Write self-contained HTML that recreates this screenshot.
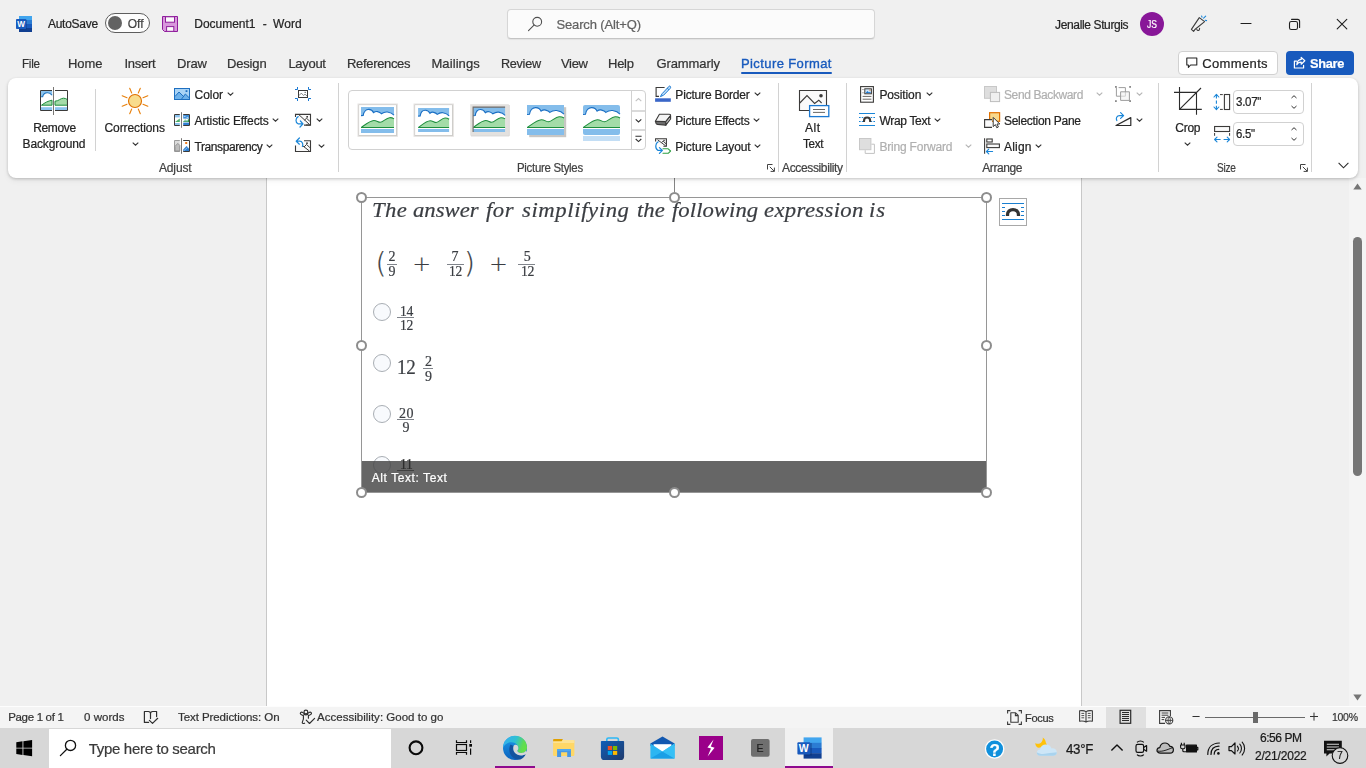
<!DOCTYPE html>
<html lang="en">
<head>
<meta charset="utf-8">
<title>Document1 - Word</title>
<style>
*{box-sizing:border-box;margin:0;padding:0}
html,body{width:1366px;height:768px;overflow:hidden;background:#f0f0f0;font-family:"Liberation Sans",sans-serif;color:#242424}
.a{position:absolute}
.t{position:absolute;white-space:pre;color:#242424;-webkit-text-stroke:0.22px}
svg{position:absolute;overflow:visible}
.sep{position:absolute;width:1px;background:#d2d2d2}
.hd{position:absolute;width:11px;height:11px;border-radius:50%;background:#fff;border:2px solid #8d8d8d;z-index:5}
.rad{position:absolute;width:18px;height:18px;border-radius:50%;background:#f8fafd;border:1.2px solid #a9aeb4}
.fb{position:absolute;height:1.1px;background:#80848b}
</style>
</head>
<body>
<!-- ================= title bar ================= -->
<div class="a" style="left:0;top:0;width:1366px;height:78px;background:#f0f0f0"></div>
<div class="a" style="left:507px;top:9px;width:368px;height:30px;background:#fbfbfb;border:1px solid #d6d6d6;border-bottom-color:#c4c4c4;border-radius:4px;box-shadow:0 1px 1px rgba(0,0,0,.06)"></div>
<div class="a" style="left:105px;top:13px;width:45px;height:20px;border:1.3px solid #5e5e5e;border-radius:10px;background:#fdfdfd"></div>
<div class="a" style="left:108px;top:16px;width:14px;height:14px;border-radius:50%;background:#626262"></div>
<div class="a" style="left:1140px;top:12px;width:24px;height:24px;border-radius:50%;background:#881798"></div>
<!-- tabs underline -->
<div class="a" style="left:741px;top:72px;width:91px;height:2px;background:#185abd;border-radius:1px"></div>
<!-- comments / share -->
<div class="a" style="left:1178px;top:51px;width:100px;height:24px;background:#fff;border:1px solid #d1d1d1;border-radius:4px"></div>
<div class="a" style="left:1286px;top:51px;width:68px;height:24px;background:#185abd;border-radius:4px"></div>

<!-- ================= document area ================= -->
<div class="a" style="left:0;top:178px;width:1366px;height:528px;background:#f0f0f0"></div>
<div class="a" style="left:266px;top:178px;width:816px;height:528px;background:#fff;border-left:1px solid #c8c8c8;border-right:1px solid #c8c8c8"></div>
<!-- scrollbar -->
<div class="a" style="left:1349px;top:178px;width:17px;height:528px;background:#f4f4f4"></div>
<div class="a" style="left:1353px;top:237px;width:9px;height:239px;background:#767676;border-radius:4.5px"></div>
<svg style="left:1353px;top:183px" width="9" height="7" viewBox="0 0 9 7"><path d="M0.3 6.5L4.5 0.6L8.7 6.5Z" fill="#767676"/></svg>
<svg style="left:1353px;top:694px" width="9" height="7" viewBox="0 0 9 7"><path d="M0.3 0.5L4.5 6.4L8.7 0.5Z" fill="#767676"/></svg>

<!-- picture -->
<div class="a" style="left:361px;top:197px;width:626px;height:296px;border:1px solid #969696;background:#fff"></div>
<div class="a" style="left:674px;top:178px;width:1.1px;height:14px;background:#858585"></div>
<!-- radios -->
<div class="rad" style="left:373.1px;top:302.8px"></div>
<div class="rad" style="left:373.1px;top:353.6px"></div>
<div class="rad" style="left:373.1px;top:404.9px"></div>
<div class="rad" style="left:373.1px;top:456px"></div>
<!-- fraction bars -->
<div class="fb" style="left:387px;top:263.5px;width:10px"></div>
<div class="fb" style="left:446.7px;top:263.5px;width:17px"></div>
<div class="fb" style="left:518px;top:263.5px;width:17px"></div>
<div class="fb" style="left:397.1px;top:317.1px;width:17.1px"></div>
<div class="fb" style="left:423px;top:368px;width:10px"></div>
<div class="fb" style="left:397.1px;top:419.1px;width:17.1px"></div>
<div class="fb" style="left:397.1px;top:470.2px;width:17.1px;background:#2d2d2d"></div>
<!-- formula symbols -->
<span class="t" style="left:375.4px;top:249.8px;font-family:'DejaVu Sans Light','DejaVu Sans',sans-serif;font-weight:200;font-size:28px;line-height:28px;color:#3a3d42">(</span>
<span class="t" style="left:464.0px;top:249.8px;font-family:'DejaVu Sans Light','DejaVu Sans',sans-serif;font-weight:200;font-size:28px;line-height:28px;color:#3a3d42">)</span>
<span class="t" style="left:412.6px;top:252.7px;font-family:'DejaVu Sans Light','DejaVu Sans',sans-serif;font-weight:200;font-size:22px;line-height:22px;color:#3a3d42">+</span>
<span class="t" style="left:489.3px;top:252.7px;font-family:'DejaVu Sans Light','DejaVu Sans',sans-serif;font-weight:200;font-size:22px;line-height:22px;color:#3a3d42">+</span>
<!-- alt text bar -->
<div class="a" style="left:362px;top:461px;width:624px;height:31px;background:rgba(68,68,68,.82)"></div>
<!-- handles -->
<div class="hd" style="left:356px;top:192px"></div>
<div class="hd" style="left:669px;top:192px"></div>
<div class="hd" style="left:980.5px;top:192px"></div>
<div class="hd" style="left:356px;top:339.5px"></div>
<div class="hd" style="left:980.5px;top:339.5px"></div>
<div class="hd" style="left:356px;top:486.5px"></div>
<div class="hd" style="left:669px;top:486.5px"></div>
<div class="hd" style="left:980.5px;top:486.5px"></div>
<!-- layout options button -->
<div class="a" style="left:999px;top:198px;width:28px;height:28px;background:#fff;border:1.3px solid #a8a8a8"></div>

<!-- ================= ribbon ================= -->
<div class="a" style="left:8px;top:78px;width:1350px;height:100px;background:#fff;border-radius:8px;box-shadow:0 1px 3px rgba(0,0,0,.2),0 3px 6px rgba(0,0,0,.05)"></div>
<div class="sep" style="left:95px;top:89px;height:62px"></div>
<div class="sep" style="left:338px;top:83px;height:89px"></div>
<div class="sep" style="left:778px;top:83px;height:89px"></div>
<div class="sep" style="left:846px;top:83px;height:89px"></div>
<div class="sep" style="left:1158px;top:83px;height:89px"></div>
<div class="sep" style="left:1311px;top:83px;height:89px"></div>
<!-- gallery -->
<div class="a" style="left:348px;top:90px;width:298px;height:60px;border:1px solid #d1d1d1;border-radius:4px;background:#fff"></div>
<div class="a" style="left:631px;top:91px;width:1px;height:58px;background:#d1d1d1"></div>
<div class="a" style="left:632px;top:109.5px;width:13px;height:2px;background:#dadada"></div>
<div class="a" style="left:632px;top:129px;width:13px;height:2px;background:#dadada"></div>
<!-- size inputs -->
<div class="a" style="left:1233px;top:90px;width:71px;height:24px;border:1px solid #d1d1d1;border-radius:4px;background:#fff"></div>
<div class="a" style="left:1233px;top:122px;width:71px;height:24px;border:1px solid #d1d1d1;border-radius:4px;background:#fff"></div>

<!-- ================= status bar ================= -->
<div class="a" style="left:0;top:706px;width:1366px;height:1px;background:#fdfdfd"></div>
<div class="a" style="left:0;top:707px;width:1366px;height:21px;background:#f4f4f4"></div>
<div class="a" style="left:1106px;top:707px;width:40px;height:21px;background:#e0e0e0"></div>
<div class="a" style="left:1205px;top:717px;width:100px;height:1px;background:#6a6a6a"></div>
<div class="a" style="left:1253px;top:711.5px;width:5px;height:11.5px;background:#6a6a6a"></div>

<!-- ================= taskbar ================= -->
<div class="a" style="left:0;top:728px;width:1366px;height:40px;background:#d7d7d7"></div>
<div class="a" style="left:49px;top:729px;width:342px;height:39px;background:#fff"></div>
<div class="a" style="left:785px;top:728px;width:48px;height:40px;background:#f1f1f1"></div>
<div class="a" style="left:495px;top:766px;width:40px;height:2px;background:#8e0a8e"></div>
<div class="a" style="left:785px;top:766px;width:48px;height:2px;background:#8e0a8e"></div>

<!-- ===== icons: title bar ===== -->
<svg style="left:16px;top:16px" width="16" height="16" viewBox="0 0 16 16">
 <rect x="3" y="0" width="13" height="4.2" fill="#41a5ee"/><rect x="3" y="4" width="13" height="4.2" fill="#2b7cd3"/>
 <rect x="3" y="8" width="13" height="4.2" fill="#185abd"/><rect x="3" y="12" width="13" height="4" fill="#103f91"/>
 <rect x="3" y="0" width="13" height="16" rx="0.8" fill="none"/>
 <rect x="3.6" y="3.8" width="7.4" height="9.6" fill="#0b2a63" opacity=".35"/>
 <rect x="0" y="3" width="10.2" height="10" rx="0.8" fill="#185abd"/>
 <text x="5.1" y="11.2" font-family="Liberation Sans, sans-serif" font-weight="bold" font-size="8.2" fill="#fff" text-anchor="middle">W</text>
</svg>
<svg style="left:162px;top:16px" width="16" height="16" viewBox="0 0 16 16">
 <path d="M0.5 0.5H15.5V15.5H2.5L0.5 13.5Z" fill="#d898dc" stroke="#8f1d9c" stroke-width="1"/>
 <rect x="3.5" y="0.8" width="9" height="5.4" fill="#fbfbfb" stroke="#8f1d9c" stroke-width="1"/>
 <rect x="4.6" y="10.6" width="7.2" height="4.7" fill="#fbfbfb" stroke="#8f1d9c" stroke-width="1"/>
</svg>
<svg style="left:527px;top:16px" width="16" height="16" viewBox="0 0 16 16" fill="none" stroke="#505050" stroke-width="1.1" stroke-linecap="round">
 <circle cx="10.2" cy="5.8" r="4.4"/><path d="M7 9.2L1.5 14.6"/>
</svg>
<svg style="left:1190px;top:15px" width="18" height="18" viewBox="0 0 18 18" fill="none" stroke-linecap="round" stroke-linejoin="round">
 <path d="M9.3 2.6L14.6 6.6L5.2 14.2L3.6 16.3L1.4 14.4Z" stroke="#3b3b3b" stroke-width="1.1"/>
 <path d="M6.8 14.6C7.6 16.2 9.6 15.6 9.6 13.4" stroke="#3b3b3b" stroke-width="1.1"/>
 <path d="M13.6 3.2L15.7 1.2M12 2.2L11.6 1M15.2 5.2L16.6 5.6" stroke="#1a86d8" stroke-width="1.1"/>
</svg>
<svg style="left:1240px;top:15px" width="110" height="18" viewBox="0 0 110 18" fill="none" stroke="#1f1f1f" stroke-width="1.1" stroke-linecap="round">
 <path d="M1 8.5H11"/>
 <rect x="49.5" y="6.5" width="8" height="8" rx="1.8"/><path d="M51.6 4.4H57.6Q59.6 4.4 59.6 6.4V12.4"/>
 <path d="M97.2 4.3L106.8 13.9M106.8 4.3L97.2 13.9"/>
</svg>
<!-- comments / share icons -->
<svg style="left:1186px;top:57px" width="12" height="12" viewBox="0 0 12 12" fill="none" stroke="#242424" stroke-width="1.1" stroke-linejoin="round">
 <path d="M0.8 1H10.8V8H4.6L2.4 10.4V8H0.8Z"/>
</svg>
<svg style="left:1293px;top:56px" width="13" height="13" viewBox="0 0 13 13" fill="none" stroke="#fff" stroke-width="1.2" stroke-linejoin="round" stroke-linecap="round">
 <path d="M3.6 5.2H1.4V12H10.6V9.4"/><path d="M8.2 1.4L11.8 4.8L8.2 8.2V6.2C6 6.2 4.6 7 3.8 8.8C4 5.6 5.6 3.6 8.2 3.4Z"/>
</svg>

<!-- ===== ribbon: Adjust ===== -->
<!-- remove background -->
<svg style="left:40px;top:86px" width="28" height="30" viewBox="0 0 28 30">
 <rect x="0.8" y="5" width="11.4" height="5.5" fill="#8cc3ee"/>
 <path d="M0.8 10.8H2.6C3.2 8.4 5.4 6.6 7.8 6.8C9.6 6.9 10.8 7.8 12 9.2V14H0.8Z" fill="#fff"/>
 <path d="M0.8 10.8H2.6C3.2 8.4 5.4 6.6 7.8 6.8C9.6 6.9 10.8 7.8 12 9.2" fill="none" stroke="#1e73be" stroke-width="1.1"/>
 <path d="M1.5 19.2C5 16.6 8 15 12 14.2V19.2Z" fill="#a5dba9" stroke="#1e8e3e" stroke-width="1"/>
 <path d="M15 15.2C18.5 15.2 20.5 12.2 23.5 12.2C25.2 12.2 26.4 12.8 27.4 13.6V19.2H15Z" fill="#a5dba9" stroke="#1e8e3e" stroke-width="1"/>
 <rect x="0.8" y="21.2" width="11.4" height="3" fill="#8cc3ee"/><rect x="15" y="21.2" width="12.4" height="3" fill="#8cc3ee"/>
 <path d="M12 4.5H0.5V24.5H12M15 4.5H27.5V24.5H15" fill="none" stroke="#3b3a39" stroke-width="1"/>
 <path d="M13.5 1V29" stroke="#797775" stroke-width="1"/>
</svg>
<!-- corrections sun -->
<svg style="left:121px;top:87px" width="28" height="28" viewBox="-14 -14 28 28">
 <circle r="6.5" fill="#f8dc8c" stroke="#e07000" stroke-width="1.1"/>
 <g stroke="#e8800c" stroke-width="1.1" stroke-linecap="round">
  <path d="M8 -3.3L12.8 -5.3M8 3.3L12.8 5.3M-8 -3.3L-12.8 -5.3M-8 3.3L-12.8 5.3M3.3 -8L5.3 -12.8M-3.3 -8L-5.3 -12.8M3.3 8L5.3 12.8M-3.3 8L-5.3 12.8"/>
 </g>
</svg>
<svg style="left:132px;top:141.5px" width="7" height="4" viewBox="0 0 7 4" fill="none" stroke="#333" stroke-width="1.1"><path d="M0.7 0.6L3.5 3.2L6.3 0.6"/></svg>
<!-- color -->
<svg style="left:174px;top:88px" width="16" height="12" viewBox="0 0 16 12">
 <rect x="0.5" y="0.5" width="15" height="11" fill="#a9d3f5" stroke="#1e6fc0"/>
 <path d="M1 8.5L5 4L9.2 8.2L11.4 6L15 9.6V11H1Z" fill="#6db1ea"/>
 <path d="M1 8.5L5 4L9.2 8.2M7.6 11L11.4 6L15 9.6" fill="none" stroke="#1e6fc0" stroke-width="1"/>
 <rect x="11.6" y="2.2" width="1.8" height="1.8" fill="#1e6fc0"/>
</svg>
<!-- artistic effects -->
<svg style="left:174px;top:112px" width="16" height="16" viewBox="0 0 16 16">
 <rect x="0.5" y="2.5" width="5.3" height="11" fill="#fff"/><rect x="9.2" y="2.5" width="6.3" height="11" fill="#fff"/>
 <rect x="1" y="3" width="4.8" height="2.4" fill="#8cc3ee"/><rect x="9.2" y="3" width="5.8" height="3.6" fill="#3a8ad6"/>
 <path d="M1 10L5.8 6.4V10Z" fill="#4caf6a"/><path d="M9.2 9.8L11 7.6L13 8.4L15 6.8V10H9.2Z" fill="#2e9a4c"/>
 <rect x="1" y="11" width="4.8" height="2" fill="#8cc3ee"/><rect x="9.2" y="10.6" width="5.8" height="2.6" fill="#2f7fd1"/>
 <path d="M9.8 4.4H11.6M12.6 5.4H14.4M10 8.8H14" stroke="#d6ecfb" stroke-width=".8"/>
 <path d="M5.8 2.5H0.5V13.5H5.8M9.2 2.5H15.5V13.5H9.2" fill="none" stroke="#3b3a39" stroke-width="1"/>
 <path d="M7.5 0.2V15.8" stroke="#797775" stroke-width="1"/>
</svg>
<!-- transparency -->
<svg style="left:174px;top:138px" width="16" height="16" viewBox="0 0 16 16">
 <path d="M5.8 2.5H0.5V13.5H5.8" fill="#dcdcdc" stroke="#9c9c9c"/>
 <path d="M1 8.4L3.8 5.4L5.8 7.4V13H1Z" fill="#bdbdbd" stroke="#8f8f8f" stroke-width=".9"/>
 <path d="M9.2 2.5H15.5V13.5H9.2" fill="#fff" stroke="#3b3a39"/>
 <rect x="11.2" y="4" width="2" height="2" fill="#f07c1c"/>
 <path d="M9.2 11.4L12.6 8L15 10.4V13H9.2Z" fill="#2f7fd1"/>
 <path d="M10 12.6L13.6 9.4" stroke="#9fcdf3" stroke-width=".8"/>
 <path d="M7.5 0.2V15.8" stroke="#797775" stroke-width="1"/>
</svg>
<!-- chevrons adjust -->
<svg style="left:226.5px;top:92.4px" width="7" height="4" viewBox="0 0 7 4" fill="none" stroke="#333" stroke-width="1.1"><path d="M0.7 0.6L3.5 3.2L6.3 0.6"/></svg>
<svg style="left:272.3px;top:118.4px" width="7" height="4" viewBox="0 0 7 4" fill="none" stroke="#333" stroke-width="1.1"><path d="M0.7 0.6L3.5 3.2L6.3 0.6"/></svg>
<svg style="left:266.3px;top:144.4px" width="7" height="4" viewBox="0 0 7 4" fill="none" stroke="#333" stroke-width="1.1"><path d="M0.7 0.6L3.5 3.2L6.3 0.6"/></svg>
<!-- compress pictures -->
<svg style="left:295px;top:87px" width="16" height="14" viewBox="0 0 16 14" fill="none">
 <rect x="3.5" y="3.5" width="9" height="7" stroke="#3b3a39" stroke-width="1" fill="#fff"/>
 <path d="M4 8.6L6.2 6.2L8.6 8.4L10 7.2L12 9" stroke="#6a6a6a" stroke-width=".8"/><rect x="9.6" y="4.8" width="1.2" height="1.2" fill="#6a6a6a"/>
 <path d="M0 2.5H2.5V0M13.5 0V2.5H16M0 11.5H2.5V14M13.5 14V11.5H16" stroke="#1a78d2" stroke-width="1"/>
</svg>
<!-- change picture -->
<svg style="left:295px;top:113px" width="16" height="16" viewBox="0 0 16 16" fill="none">
 <path d="M0.5 4V1.4H15.5V12.1H9" stroke="#3b3a39" stroke-width="1.1" fill="#fafafa"/>
 <path d="M4 1.8L14.6 11.6M9.4 7.2L11.6 5.2L15 8.6M11 12L15.2 12" stroke="#3b3a39" stroke-width="1"/>
 <rect x="11.4" y="3" width="1.6" height="1.6" fill="#3b3a39"/>
 <path d="M3.2 3.6C0.4 5 0.2 9.6 3 10.8H7.6M5.4 8L8 10.8L5 14" stroke="#1a86d8" stroke-width="1.2" stroke-linecap="round" stroke-linejoin="round"/>
</svg>
<svg style="left:315.9px;top:118.4px" width="7" height="4" viewBox="0 0 7 4" fill="none" stroke="#333" stroke-width="1.1"><path d="M0.7 0.6L3.5 3.2L6.3 0.6"/></svg>
<!-- reset picture -->
<svg style="left:295px;top:137px" width="16" height="16" viewBox="0 0 16 16" fill="none">
 <path d="M9 3.8H15.5V14.5H0.5V8.4" stroke="#3b3a39" stroke-width="1.1" fill="#fafafa"/>
 <path d="M8 9L14.4 14M9 10L11.6 7.4L15 10.8" stroke="#3b3a39" stroke-width="1"/>
 <rect x="11.2" y="5.4" width="1.6" height="1.6" fill="#3b3a39"/>
 <path d="M4.4 1L1.2 4.2L4.4 7.2M1.6 4.2H4.6C7.4 4.2 8.4 7 7.4 9.4" stroke="#1a86d8" stroke-width="1.2" stroke-linecap="round" stroke-linejoin="round"/>
</svg>
<svg style="left:317.9px;top:144.4px" width="7" height="4" viewBox="0 0 7 4" fill="none" stroke="#333" stroke-width="1.1"><path d="M0.7 0.6L3.5 3.2L6.3 0.6"/></svg>
<svg style="left:348px;top:90px" width="298" height="60" viewBox="348 90 298 60"><rect x="358.6" y="104.6" width="38" height="31" fill="#fff" stroke="#c8c6c4" stroke-width="1"/><rect x="358" y="104" width="39.4" height="32.4" fill="none" stroke="#e6e4e2" stroke-width="1"/><rect x="361.00" y="107.00" width="33.00" height="26.00" rx="0" fill="#fff"/><path d="M361.00 107.00Q361.00 107.00 361.00 107.00H394.00Q394.00 107.00 394.00 107.00V116.25H361.00Z" fill="#84bdeb"/><path d="M361.00 115.64L363.20 115.44C363.80 111.42 366.40 109.31 368.80 109.41C371.20 109.51 372.80 111.02 373.60 112.63C374.80 111.62 376.40 111.32 377.60 111.62C379.20 112.02 380.60 112.83 381.40 113.73C383.20 112.43 385.40 111.82 387.40 112.02C390.20 112.43 392.40 113.43 394.00 115.24L394.00 119.06 361.00 119.06Z" fill="#fff"/><path d="M361.00 115.64L363.20 115.44C363.80 111.42 366.40 109.31 368.80 109.41C371.20 109.51 372.80 111.02 373.60 112.63C374.80 111.62 376.40 111.32 377.60 111.62C379.20 112.02 380.60 112.83 381.40 113.73C383.20 112.43 385.40 111.82 387.40 112.02C390.20 112.43 392.40 113.43 394.00 115.24" fill="none" stroke="#1a6fc4" stroke-width="1.15"/><path d="M361.30 127.40C365.50 124.49 370.00 120.67 373.80 120.47C376.40 120.37 378.20 122.27 380.20 122.27C383.20 122.27 386.00 117.85 389.60 117.65C391.40 117.55 392.80 118.05 394.00 118.86L394.00 127.40Z" fill="#a3dca8"/><path d="M361.30 127.40C365.50 124.49 370.00 120.67 373.80 120.47C376.40 120.37 378.20 122.27 380.20 122.27C383.20 122.27 386.00 117.85 389.60 117.65C391.40 117.55 392.80 118.05 394.00 118.86M361.00 127.40L394.00 127.40" fill="none" stroke="#1e8e3e" stroke-width="1.05"/><path d="M361.00 129.00H394.00V133.00Q394.00 133.00 394.00 133.00H361.00Q361.00 133.00 361.00 133.00Z" fill="#84bdeb"/><rect x="414.6" y="104.6" width="38" height="31" fill="#fff" stroke="#c8c6c4" stroke-width="1"/><rect x="414" y="104" width="39.4" height="32.4" fill="none" stroke="#e6e4e2" stroke-width="1"/><rect x="418.10" y="107.90" width="31.00" height="24.00" rx="0" fill="#fff"/><path d="M418.10 107.90Q418.10 107.90 418.10 107.90H449.10Q449.10 107.90 449.10 107.90V116.74H418.10Z" fill="#84bdeb"/><path d="M418.10 116.16L420.17 115.97C420.73 112.13 423.17 110.11 425.43 110.21C427.68 110.30 429.18 111.74 429.94 113.28C431.06 112.32 432.57 112.03 433.69 112.32C435.20 112.70 436.51 113.47 437.26 114.34C438.95 113.09 441.02 112.51 442.90 112.70C445.53 113.09 447.60 114.05 449.10 115.78L449.10 119.43 418.10 119.43Z" fill="#fff"/><path d="M418.10 116.16L420.17 115.97C420.73 112.13 423.17 110.11 425.43 110.21C427.68 110.30 429.18 111.74 429.94 113.28C431.06 112.32 432.57 112.03 433.69 112.32C435.20 112.70 436.51 113.47 437.26 114.34C438.95 113.09 441.02 112.51 442.90 112.70C445.53 113.09 447.60 114.05 449.10 115.78" fill="none" stroke="#1a6fc4" stroke-width="1.15"/><path d="M418.38 127.40C422.33 124.61 426.55 120.96 430.12 120.77C432.57 120.68 434.26 122.50 436.14 122.50C438.95 122.50 441.58 118.27 444.97 118.08C446.66 117.99 447.97 118.47 449.10 119.23L449.10 127.40Z" fill="#a3dca8"/><path d="M418.38 127.40C422.33 124.61 426.55 120.96 430.12 120.77C432.57 120.68 434.26 122.50 436.14 122.50C438.95 122.50 441.58 118.27 444.97 118.08C446.66 117.99 447.97 118.47 449.10 119.23M418.10 127.40L449.10 127.40" fill="none" stroke="#1e8e3e" stroke-width="1.05"/><path d="M418.10 129.00H449.10V131.90Q449.10 131.90 449.10 131.90H418.10Q418.10 131.90 418.10 131.90Z" fill="#84bdeb"/><rect x="470.2" y="104.2" width="38.6" height="31.4" fill="#e3e1df"/><path d="M471 135.9H509.2V105" fill="none" stroke="#d0cecc" stroke-width=".9"/><rect x="473.10" y="107.10" width="32.00" height="24.80" rx="0" fill="#fff"/><path d="M473.10 107.10Q473.10 107.10 473.10 107.10H505.10Q505.10 107.10 505.10 107.10V116.30H473.10Z" fill="#84bdeb"/><path d="M473.10 115.70L475.23 115.50C475.82 111.50 478.34 109.40 480.66 109.50C482.99 109.60 484.54 111.10 485.32 112.70C486.48 111.70 488.03 111.40 489.20 111.70C490.75 112.10 492.11 112.90 492.88 113.80C494.63 112.50 496.76 111.90 498.70 112.10C501.42 112.50 503.55 113.50 505.10 115.30L505.10 119.10 473.10 119.10Z" fill="#fff"/><path d="M473.10 115.70L475.23 115.50C475.82 111.50 478.34 109.40 480.66 109.50C482.99 109.60 484.54 111.10 485.32 112.70C486.48 111.70 488.03 111.40 489.20 111.70C490.75 112.10 492.11 112.90 492.88 113.80C494.63 112.50 496.76 111.90 498.70 112.10C501.42 112.50 503.55 113.50 505.10 115.30" fill="none" stroke="#1a6fc4" stroke-width="1.15"/><path d="M473.39 127.40C477.46 124.50 481.83 120.70 485.51 120.50C488.03 120.40 489.78 122.30 491.72 122.30C494.63 122.30 497.34 117.90 500.83 117.70C502.58 117.60 503.94 118.10 505.10 118.90L505.10 127.40Z" fill="#a3dca8"/><path d="M473.39 127.40C477.46 124.50 481.83 120.70 485.51 120.50C488.03 120.40 489.78 122.30 491.72 122.30C494.63 122.30 497.34 117.90 500.83 117.70C502.58 117.60 503.94 118.10 505.10 118.90M473.10 127.40L505.10 127.40" fill="none" stroke="#1e8e3e" stroke-width="1.05"/><path d="M473.10 129.00H505.10V131.90Q505.10 131.90 505.10 131.90H473.10Q473.10 131.90 473.10 131.90Z" fill="#84bdeb"/><path d="M473.1 132V107.1H505.1" fill="none" stroke="#6f6b68" stroke-width="1.1"/><rect x="529.2" y="107.2" width="37" height="30" fill="#c8c6c4"/><rect x="527.00" y="105.00" width="37.00" height="30.00" rx="0" fill="#fff"/><path d="M527.00 105.00Q527.00 105.00 527.00 105.00H564.00Q564.00 105.00 564.00 105.00V115.15H527.00Z" fill="#84bdeb"/><path d="M527.00 114.49L529.47 114.27C530.14 109.86 533.05 107.54 535.75 107.65C538.44 107.76 540.23 109.41 541.13 111.18C542.47 110.08 544.27 109.74 545.61 110.08C547.41 110.52 548.98 111.40 549.87 112.39C551.89 110.96 554.36 110.30 556.60 110.52C559.74 110.96 562.21 112.06 564.00 114.05L564.00 118.24 527.00 118.24Z" fill="#fff"/><path d="M527.00 114.49L529.47 114.27C530.14 109.86 533.05 107.54 535.75 107.65C538.44 107.76 540.23 109.41 541.13 111.18C542.47 110.08 544.27 109.74 545.61 110.08C547.41 110.52 548.98 111.40 549.87 112.39C551.89 110.96 554.36 110.30 556.60 110.52C559.74 110.96 562.21 112.06 564.00 114.05" fill="none" stroke="#1a6fc4" stroke-width="1.15"/><path d="M527.34 127.40C532.05 124.20 537.09 120.01 541.35 119.79C544.27 119.68 546.28 121.77 548.53 121.77C551.89 121.77 555.03 116.92 559.07 116.70C561.08 116.59 562.65 117.14 564.00 118.02L564.00 127.40Z" fill="#a3dca8"/><path d="M527.34 127.40C532.05 124.20 537.09 120.01 541.35 119.79C544.27 119.68 546.28 121.77 548.53 121.77C551.89 121.77 555.03 116.92 559.07 116.70C561.08 116.59 562.65 117.14 564.00 118.02M527.00 127.40L564.00 127.40" fill="none" stroke="#1e8e3e" stroke-width="1.05"/><path d="M527.00 129.00H564.00V135.00Q564.00 135.00 564.00 135.00H527.00Q527.00 135.00 527.00 135.00Z" fill="#84bdeb"/><rect x="583.00" y="105.00" width="37.00" height="30.00" rx="2" fill="#fff"/><path d="M583.00 107.00Q583.00 105.00 585.00 105.00H618.00Q620.00 105.00 620.00 107.00V115.15H583.00Z" fill="#84bdeb"/><path d="M583.00 114.49L585.47 114.27C586.14 109.86 589.05 107.54 591.75 107.65C594.44 107.76 596.23 109.41 597.13 111.18C598.47 110.08 600.27 109.74 601.61 110.08C603.41 110.52 604.98 111.40 605.87 112.39C607.89 110.96 610.36 110.30 612.60 110.52C615.74 110.96 618.21 112.06 620.00 114.05L620.00 118.24 583.00 118.24Z" fill="#fff"/><path d="M583.00 114.49L585.47 114.27C586.14 109.86 589.05 107.54 591.75 107.65C594.44 107.76 596.23 109.41 597.13 111.18C598.47 110.08 600.27 109.74 601.61 110.08C603.41 110.52 604.98 111.40 605.87 112.39C607.89 110.96 610.36 110.30 612.60 110.52C615.74 110.96 618.21 112.06 620.00 114.05" fill="none" stroke="#1a6fc4" stroke-width="1.15"/><path d="M583.34 127.40C588.05 124.20 593.09 120.01 597.35 119.79C600.27 119.68 602.28 121.77 604.53 121.77C607.89 121.77 611.03 116.92 615.07 116.70C617.08 116.59 618.65 117.14 620.00 118.02L620.00 127.40Z" fill="#a3dca8"/><path d="M583.34 127.40C588.05 124.20 593.09 120.01 597.35 119.79C600.27 119.68 602.28 121.77 604.53 121.77C607.89 121.77 611.03 116.92 615.07 116.70C617.08 116.59 618.65 117.14 620.00 118.02M583.00 127.40L620.00 127.40" fill="none" stroke="#1e8e3e" stroke-width="1.05"/><path d="M583.00 129.00H620.00V133.00Q620.00 135.00 618.00 135.00H585.00Q583.00 135.00 583.00 133.00Z" fill="#84bdeb"/><rect x="583" y="136" width="37" height="5" fill="#c3def5"/><path d="M635.7 101.2L638.5 98.6L641.3 101.2" fill="none" stroke="#c2c2c2" stroke-width="1.1"/><path d="M635.7 119.3L638.5 121.9L641.3 119.3" fill="none" stroke="#333" stroke-width="1.1"/><path d="M635.4 136.3H641.6M635.7 139L638.5 141.6L641.3 139" fill="none" stroke="#333" stroke-width="1.1"/></svg>
<!-- ===== ribbon: picture border / effects / layout ===== -->
<svg style="left:650px;top:82px" width="30" height="76" viewBox="650 82 30 76" fill="none">
 <!-- border -->
 <path d="M664.6 87.5H656.1V96.4H659" stroke="#3b3a39" stroke-width="1.1"/>
 <path d="M668.4 87L662.2 93.6L660.4 96.6L663.6 95.2L670 88.6C670.8 87.8 670.8 86.8 670.2 86.2C669.6 85.8 668.8 86.2 668.4 87Z" fill="#c4e2fa" stroke="#1a78d2" stroke-width="1" stroke-linejoin="round"/>
 <path d="M667.2 88.2L669 89.8" stroke="#1a78d2" stroke-width=".9"/>
 <rect x="655.1" y="98.3" width="15.7" height="3.5" fill="#3a66c8"/>
 <!-- effects -->
 <path d="M659.4 114.3H669.2Q671 114.3 670.4 115.8L665.8 121.6L655.4 121.2Z" fill="#f4f4f4" stroke="#3b3a39" stroke-width="1.1" stroke-linejoin="round"/>
 <path d="M655.4 121.2L665.8 121.6V125.2L657.6 124.4Q656.4 124.2 656 123.2Z" fill="#6e6e6e" stroke="#3b3a39" stroke-width="1.1" stroke-linejoin="round"/>
 <path d="M665.8 121.6L670.6 115.6V119L665.8 125.2Z" fill="#c6c6c6" stroke="#3b3a39" stroke-width="1.1" stroke-linejoin="round"/>
 <!-- layout -->
 <path d="M655.6 141.4V138.7H666.4V146.3H663.4" stroke="#3b3a39" stroke-width="1.1" fill="#fafafa"/>
 <path d="M657.6 139.8L665.6 145.8M661.6 142.4L663.2 141.2L666 143.8" stroke="#3b3a39" stroke-width=".95"/><rect x="663.4" y="139.8" width="1.3" height="1.3" fill="#3b3a39"/>
 <path d="M658.2 141.8C655.2 143.4 654.8 148.6 658 150.4H662M659.4 147.6L662.4 150.4L659.4 153.4" stroke="#1a86d8" stroke-width="1.2" stroke-linecap="round" stroke-linejoin="round"/>
 <path d="M663 148.8H668.2L670.6 151L668.2 153.3H663" stroke="#2ea043" stroke-width="1.1" stroke-linejoin="round" stroke-linecap="round"/>
</svg>
<svg style="left:753.6px;top:92.4px" width="7" height="4" viewBox="0 0 7 4" fill="none" stroke="#333" stroke-width="1.1"><path d="M0.7 0.6L3.5 3.2L6.3 0.6"/></svg>
<svg style="left:753.2px;top:118.4px" width="7" height="4" viewBox="0 0 7 4" fill="none" stroke="#333" stroke-width="1.1"><path d="M0.7 0.6L3.5 3.2L6.3 0.6"/></svg>
<svg style="left:754.2px;top:144.4px" width="7" height="4" viewBox="0 0 7 4" fill="none" stroke="#333" stroke-width="1.1"><path d="M0.7 0.6L3.5 3.2L6.3 0.6"/></svg>
<!-- dialog launchers -->
<svg style="left:767px;top:164px" width="8" height="8" viewBox="0 0 8 8" fill="none" stroke="#424242" stroke-width="1"><path d="M0.5 5.5V0.5H5.5M2.8 2.8L7.2 7.2M7.4 3.6V7.4H3.6"/></svg>
<svg style="left:1300px;top:164px" width="8" height="8" viewBox="0 0 8 8" fill="none" stroke="#424242" stroke-width="1"><path d="M0.5 5.5V0.5H5.5M2.8 2.8L7.2 7.2M7.4 3.6V7.4H3.6"/></svg>
<!-- alt text -->
<svg style="left:798px;top:89px" width="32" height="29" viewBox="0 0 32 29" fill="none">
 <path d="M11 21.5H1.5V1.5H28.5V16" stroke="#3b3a39" stroke-width="1.1" fill="#fafafa"/>
 <path d="M1.8 14L9 6.6L16.6 14.4L20.8 11.2L23.6 14" stroke="#3b3a39" stroke-width="1.1"/>
 <circle cx="23" cy="6.8" r="1.8" fill="#3b3a39"/>
 <rect x="11.6" y="16.6" width="19.2" height="11" fill="#fff" stroke="#1a78d2" stroke-width="1.3"/>
 <path d="M15 20.5H27M15 23.4H27" stroke="#6a6866" stroke-width="1"/>
</svg>
<!-- position -->
<svg style="left:859.5px;top:85.5px" width="14" height="17" viewBox="0 0 14 17" fill="none">
 <rect x="0.6" y="0.6" width="12.8" height="15.6" fill="#fff" stroke="#3b3a39" stroke-width="1.1"/>
 <rect x="4.8" y="2.8" width="6.6" height="5" fill="#cfe6fa" stroke="#3b3a39" stroke-width="1"/>
 <path d="M5.6 7L7.4 5L9 6.6L9.8 5.8L11 7" fill="#1a78d2"/><rect x="9.4" y="3.6" width="1.1" height="1.1" fill="#f07c1c"/>
 <path d="M2.6 3.6H3.4M2.6 6.8H3.4" stroke="#3b3a39" stroke-width="1"/>
 <path d="M2.6 10.4H11.4M2.6 13.2H11.4" stroke="#6a6866" stroke-width="1"/>
</svg>
<svg style="left:925.6px;top:92.4px" width="7" height="4" viewBox="0 0 7 4" fill="none" stroke="#333" stroke-width="1.1"><path d="M0.7 0.6L3.5 3.2L6.3 0.6"/></svg>
<!-- wrap text -->
<svg style="left:859px;top:112px" width="16" height="15" viewBox="0 0 16 15" fill="none">
 <path d="M0 1.5H16M0 13.5H16" stroke="#1a86d8" stroke-width="1.1"/>
 <path d="M0 5.5H1.6M2.8 5.5H4.2M11.8 5.5H13.2M14.4 5.5H16M0 9.5H1.6M2.8 9.5H4.2M11.8 9.5H13.2M14.4 9.5H16" stroke="#1a86d8" stroke-width="1.1"/>
 <path d="M5 9.9V8.9C5 6.6 6.3 5.5 8.1 5.5C9.9 5.5 11.2 6.6 11.2 8.9V9.9" stroke="#3b3a39" stroke-width="2.1"/>
</svg>
<svg style="left:934.4px;top:118.4px" width="7" height="4" viewBox="0 0 7 4" fill="none" stroke="#333" stroke-width="1.1"><path d="M0.7 0.6L3.5 3.2L6.3 0.6"/></svg>
<!-- bring forward (disabled) -->
<svg style="left:859px;top:138px" width="16" height="16" viewBox="0 0 16 16" fill="none">
 <path d="M12.4 6.2H15.4V15.4H6.2V12.2" stroke="#c2c2c2" stroke-width="1"/>
 <rect x="0.5" y="0.5" width="11.4" height="11.2" fill="#dedede" stroke="#c8c8c8"/>
</svg>
<svg style="left:965px;top:144.4px" width="7" height="4" viewBox="0 0 7 4" fill="none" stroke="#b5b5b5" stroke-width="1.1"><path d="M0.7 0.6L3.5 3.2L6.3 0.6"/></svg>
<!-- send backward (disabled) -->
<svg style="left:984px;top:86px" width="16" height="16" viewBox="0 0 16 16" fill="none">
 <rect x="0.5" y="0.5" width="12" height="11.8" fill="#dedede" stroke="#c8c8c8"/>
 <rect x="6.4" y="6.4" width="9.2" height="9.2" fill="#f0f0f0" stroke="#bdbdbd"/>
</svg>
<svg style="left:1096.2px;top:92.4px" width="7" height="4" viewBox="0 0 7 4" fill="none" stroke="#b5b5b5" stroke-width="1.1"><path d="M0.7 0.6L3.5 3.2L6.3 0.6"/></svg>
<!-- selection pane -->
<svg style="left:984px;top:112px" width="17" height="17" viewBox="0 0 17 17" fill="none">
 <rect x="5.6" y="0.7" width="10" height="8.6" fill="#f8d98c" stroke="#e07000" stroke-width="1.2"/>
 <path d="M8 7.6H0.6V15.4H8" stroke="#3b3a39" stroke-width="1.1" fill="#fafafa"/>
 <path d="M9.2 5.4V14.6L11.4 12.6L12.8 15.8L14.4 15L13 12H15.8Z" fill="#fff" stroke="#3b3a39" stroke-width="1" stroke-linejoin="round"/>
</svg>
<!-- align -->
<svg style="left:984px;top:138px" width="16" height="16" viewBox="0 0 16 16" fill="none">
 <path d="M0.6 0.2V15.8" stroke="#3b3a39" stroke-width="1.1"/>
 <rect x="2.8" y="1" width="5.4" height="3" stroke="#3b3a39" stroke-width="1.1"/>
 <rect x="2.8" y="6" width="12.6" height="3.6" stroke="#3b3a39" stroke-width="1.1" fill="#fafafa"/>
 <path d="M2.4 13.5H8.6M4.8 11.2L2.4 13.5L4.8 15.8" stroke="#1a86d8" stroke-width="1.1" stroke-linecap="round" stroke-linejoin="round"/>
</svg>
<svg style="left:1035.4px;top:144.4px" width="7" height="4" viewBox="0 0 7 4" fill="none" stroke="#333" stroke-width="1.1"><path d="M0.7 0.6L3.5 3.2L6.3 0.6"/></svg>
<!-- group (disabled) -->
<svg style="left:1115px;top:86px" width="16" height="16" viewBox="0 0 16 16" fill="none">
 <path d="M1.4 1.6V10.2H10.4V1.6H3.6" stroke="#9d9d9d" stroke-width="1"/>
 <path d="M5.6 5.8V14.4H14.4V5.8H5.6" stroke="#9d9d9d" stroke-width="1" fill="#f2f2f2" fill-opacity=".6"/>
 <rect x="0" y="0" width="1.8" height="1.8" fill="#8a8a8a"/><rect x="14.2" y="0" width="1.8" height="1.8" fill="#8a8a8a"/>
 <rect x="0" y="14.2" width="1.8" height="1.8" fill="#8a8a8a"/><rect x="14.2" y="14.2" width="1.8" height="1.8" fill="#8a8a8a"/>
</svg>
<svg style="left:1136px;top:92.4px" width="7" height="4" viewBox="0 0 7 4" fill="none" stroke="#b5b5b5" stroke-width="1.1"><path d="M0.7 0.6L3.5 3.2L6.3 0.6"/></svg>
<!-- rotate -->
<svg style="left:1115px;top:111px" width="17" height="16" viewBox="0 0 17 16" fill="none">
 <path d="M1 14.5H15.8V6.6Z" stroke="#2b2b2b" stroke-width="1.2" stroke-linejoin="round" fill="#fafafa"/>
 <path d="M1.8 9.6C0.6 7.2 1.8 4.6 4.6 4.6H8.2M5.6 1.6L8.6 4.6L5.6 7.4" stroke="#1a86d8" stroke-width="1.2" stroke-linecap="round" stroke-linejoin="round"/>
</svg>
<svg style="left:1136px;top:118.4px" width="7" height="4" viewBox="0 0 7 4" fill="none" stroke="#333" stroke-width="1.1"><path d="M0.7 0.6L3.5 3.2L6.3 0.6"/></svg>
<!-- crop -->
<svg style="left:1173px;top:86px" width="30" height="30" viewBox="0 0 30 30" fill="none" stroke="#2b2b2b" stroke-width="1.1">
 <path d="M6.5 1V23.4H28.8M1 6.4H23.5V28.8M6.5 23.4L28 2"/>
</svg>
<svg style="left:1184px;top:142.4px" width="7" height="4" viewBox="0 0 7 4" fill="none" stroke="#333" stroke-width="1.1"><path d="M0.7 0.6L3.5 3.2L6.3 0.6"/></svg>
<!-- height / width -->
<svg style="left:1213px;top:93px" width="18" height="18" viewBox="0 0 18 18" fill="none">
 <path d="M3.4 2V16" stroke="#1a86d8" stroke-width="1.1" stroke-dasharray="3.4 2"/>
 <path d="M1 4L3.4 1.4L5.8 4M1 14L3.4 16.6L5.8 14" stroke="#1a86d8" stroke-width="1.1" stroke-linecap="round" stroke-linejoin="round"/>
 <path d="M7 1.6H9.8M7 16.4H9.8" stroke="#3b3a39" stroke-width="1"/>
 <rect x="11.4" y="1.5" width="5.2" height="15" stroke="#3b3a39" stroke-width="1.1" fill="#fafafa"/>
</svg>
<svg style="left:1213px;top:125px" width="18" height="18" viewBox="0 0 18 18" fill="none">
 <rect x="1.6" y="1.5" width="15" height="5" stroke="#3b3a39" stroke-width="1.1" fill="#fafafa"/>
 <path d="M1.6 8V10.8M16.6 8V10.8" stroke="#3b3a39" stroke-width="1"/>
 <path d="M2 14.5H7.6M10.6 14.5H16.2" stroke="#1a86d8" stroke-width="1.1"/>
 <path d="M4 12.2L1.6 14.5L4 16.8M14.2 12.2L16.6 14.5L14.2 16.8" stroke="#1a86d8" stroke-width="1.1" stroke-linecap="round" stroke-linejoin="round"/>
</svg>
<!-- spinners -->
<svg style="left:1291px;top:95px" width="6" height="14" viewBox="0 0 6 14" fill="none" stroke="#333" stroke-width="1"><path d="M0.5 3L3 0.7L5.5 3M0.5 11L3 13.3L5.5 11"/></svg>
<svg style="left:1291px;top:127px" width="6" height="14" viewBox="0 0 6 14" fill="none" stroke="#333" stroke-width="1"><path d="M0.5 3L3 0.7L5.5 3M0.5 11L3 13.3L5.5 11"/></svg>
<!-- collapse ribbon chevron -->
<svg style="left:1338px;top:161.5px" width="11" height="7" viewBox="0 0 11 7" fill="none" stroke="#2b2b2b" stroke-width="1.1"><path d="M0.6 0.8L5.5 5.8L10.4 0.8"/></svg>
<!-- layout options icon -->
<svg style="left:1001px;top:202px" width="24" height="19" viewBox="0 0 24 19" fill="none">
 <path d="M1 1.5H23M1 17.5H23" stroke="#1a7fd0" stroke-width="1.2"/>
 <path d="M1 5.5H4M20 5.5H23M1 9.5H4M20 9.5H23M1 13.5H4M20 13.5H23" stroke="#1a7fd0" stroke-width="1.2"/>
 <path d="M6.5 13.9V13C6.5 9.6 8.8 7.7 12 7.7C15.2 7.7 17.5 9.6 17.5 13V13.9" stroke="#333" stroke-width="3.3"/>
</svg>
<!-- ===== status bar icons ===== -->
<svg style="left:140px;top:706px" width="24" height="22" viewBox="140 706 24 22" fill="none" stroke="#2f2f2f" stroke-width="1.2" stroke-linejoin="round" stroke-linecap="round">
 <path d="M148.6 722.4H144.4V711.5H148.4Q150.5 711.5 150.5 713.6V718.6M150.5 713.6Q150.5 711.5 152.6 711.5H156.6V716.6"/>
 <path d="M149.4 720.4L152.5 723.4L157.7 718.3"/>
</svg>
<svg style="left:296px;top:706px" width="24" height="22" viewBox="296 706 24 22" fill="none" stroke="#2f2f2f" stroke-width="1.15" stroke-linejoin="round" stroke-linecap="round">
 <circle cx="305.9" cy="712" r="1.9"/>
 <path d="M304.2 713.6C303 712.4 301.4 711.8 300.6 712.6C299.8 713.6 300.6 714.6 303.4 715.6C303.8 718.4 303.2 720.6 302.4 722C301.8 723.2 303 724 304.6 723.2"/>
 <path d="M307.6 713.6C308.8 712.4 310.4 711.8 311.2 712.6C312 713.6 311.2 714.6 308.4 715.6V718.2"/>
 <path d="M304 714.4Q305.9 715.2 307.8 714.4"/>
 <path d="M306.2 720.2L309.5 723.5L314.6 718.3"/>
</svg>
<svg style="left:1006.5px;top:709.5px" width="15" height="15" viewBox="0 0 15 15" fill="none" stroke="#3b3b3b" stroke-width="1.1">
 <path d="M0.6 3.4V0.6H3.4M11.6 0.6H14.4V3.4M14.4 11.6V14.4H11.6M3.4 14.4H0.6V11.6"/>
 <path d="M3.8 2.8H8.6L11.2 5.4V12.2H3.8Z" stroke-linejoin="round"/><path d="M8.4 3V5.6H11"/>
</svg>
<svg style="left:1078.5px;top:710px" width="14" height="13" viewBox="0 0 14 13" fill="none" stroke="#3b3b3b" stroke-width="1.1" stroke-linejoin="round">
 <path d="M7 1.6V12M7 1.6C5.4 0.6 3 0.5 0.6 0.8V11.2C3 10.9 5.4 11 7 12C8.6 11 11 10.9 13.4 11.2V0.8C11 0.5 8.6 0.6 7 1.6Z"/>
 <path d="M2.4 3.4H5.2M2.4 5.6H5.2M2.4 7.8H5.2M8.8 3.4H11.6M8.8 5.6H11.6M8.8 7.8H11.6" stroke-width=".9"/>
</svg>
<svg style="left:1119px;top:709px" width="13" height="15" viewBox="0 0 13 15" fill="none" stroke="#2b2b2b">
 <rect x="1.1" y="1.3" width="10.6" height="13" stroke-width="1.2"/>
 <path d="M3 3.5H10M3 5.5H10M3 7.5H10M3 9.5H10M3 11.5H10" stroke-width="1"/>
</svg>
<svg style="left:1159px;top:709.5px" width="15" height="15" viewBox="0 0 15 15" fill="none" stroke="#3b3b3b" stroke-width="1.1">
 <path d="M6 13.4H0.6V0.6H11.4V6"/>
 <path d="M2.6 3H9.4M2.6 5.2H9.4M2.6 7.4H6M2.6 9.6H5.2" stroke-width="1"/>
 <circle cx="10.2" cy="10.4" r="3.6" fill="#f5f5f5"/><path d="M6.6 10.4H13.8M10.2 6.8C8.6 8.6 8.6 12.2 10.2 14M10.2 6.8C11.8 8.6 11.8 12.2 10.2 14" stroke-width=".9"/>
</svg>
<svg style="left:1192px;top:711px" width="128" height="11" viewBox="0 0 128 11" fill="none" stroke="#333" stroke-width="1">
 <path d="M0.5 5.5H7.6M118 5.5H126M122 1.6V9.6"/>
</svg>
<!-- ===== taskbar icons ===== -->
<svg style="left:15.7px;top:739.6px" width="16.5" height="16.6" viewBox="0 0 17 17" fill="#000">
 <path d="M0.3 2.2L6.7 1.3V7.9H0.3ZM7.6 1.2L16.6 0V7.9H7.6ZM0.3 8.8H6.7V15.4L0.3 14.5ZM7.6 8.8H16.6V16.7L7.6 15.5Z"/>
</svg>
<svg style="left:59px;top:739px" width="18" height="18" viewBox="0 0 18 18" fill="none" stroke="#111" stroke-width="1.3" stroke-linecap="round">
 <circle cx="11.5" cy="6.4" r="5.1"/><path d="M7.8 10.2L1.4 16.6"/>
</svg>
<svg style="left:400px;top:732px" width="80" height="32" viewBox="400 732 80 32" fill="none" stroke="#0a0a0a">
 <circle cx="416" cy="747.8" r="6.4" stroke-width="2.1"/>
 <g stroke-width="1.2">
 <rect x="456.5" y="744.5" width="10" height="6"/>
 <path d="M456.5 740.2V742.5H466.5V740.2M456.5 754.8V752.5H466.5V754.8"/>
 <path d="M470.6 740.2V743M470.6 748.4V754.8"/>
 </g>
 <rect x="469.3" y="744" width="2.7" height="2.7" fill="#0a0a0a" stroke="none"/>
</svg>
<!-- edge -->
<svg style="left:503px;top:736px" width="24" height="24" viewBox="503 736 24 24">
 <defs><linearGradient id="eg" x1="0" x2="1" y1="0.2" y2="0.5"><stop offset="0" stop-color="#35aef2"/><stop offset="0.5" stop-color="#2fc0d2"/><stop offset="0.85" stop-color="#5fdc52"/><stop offset="1" stop-color="#63e048"/></linearGradient>
 <linearGradient id="eb" x1="0" x2="0" y1="0" y2="1"><stop offset="0" stop-color="#1e9aea"/><stop offset="1" stop-color="#0b62bd"/></linearGradient></defs>
 <circle cx="515" cy="748" r="12" fill="url(#eb)"/>
 <path d="M503 748A12 12 0 0 1 527 747.4C527 750.6 524.6 753 521.4 753C519 753 517.2 752 517.4 750.6C518.6 749.6 518.8 747.6 517.6 745.6C516 742.8 512.4 741.6 509 742.6C506 743.6 503.8 746 503 748Z" fill="url(#eg)"/>
 <path d="M510.6 744.4C508.6 747.6 508.8 752.6 511.8 756.2C514.2 759 517.6 760 520.4 759.4C523 758.4 524.8 756.4 525.8 754C523.6 755.6 520.4 756 517.6 754.8C514.2 753.2 512.4 749.6 513.6 746Z" fill="#14539f"/>
 <path d="M513.6 746C514.4 744.4 516.4 744.4 517.6 745.6C518.8 747.6 518.6 749.6 517.4 750.6C517.2 752 519 753 521.4 753C523.2 753 524.8 752.2 525.9 750.8L527.4 753.2L525.8 754C523.6 755.6 520.4 756 517.6 754.8C514.2 753.2 512.4 749.6 513.6 746Z" fill="#d7d7d7"/>
</svg>
<!-- file explorer -->
<svg style="left:552px;top:738px" width="24" height="20" viewBox="552 738 24 20">
 <path d="M553.1 740Q553.1 739.1 554 739.1H562Q562.9 739.1 562.9 740L561.8 741.8H553.1Z" fill="#e0a000"/>
 <path d="M553.1 741.6H561.6L562.8 740H573.6Q574.4 740 574.4 740.8V755.1Q574.4 755.9 573.6 755.9H553.9Q553.1 755.9 553.1 755.1Z" fill="#ffd766"/>
 <path d="M553.1 741.6H561.6L562.8 740H573.6Q574.4 740 574.4 740.8V743H553.1Z" fill="#fde394"/>
 <path d="M557.1 756.9V749.9Q557.1 748.9 558.1 748.9H569.9Q570.9 748.9 570.9 749.9V756.9H567.2V752.3H561.1V756.9Z" fill="#4797e6"/>
 <path d="M557.1 749.9Q557.1 748.9 558.1 748.9H569.9Q570.9 748.9 570.9 749.9V751H557.1Z" fill="#4fa8f0"/>
</svg>
<!-- store -->
<svg style="left:600px;top:736px" width="25" height="25" viewBox="600 736 25 25">
 <defs><linearGradient id="sg" x1="0" x2="1" y1="0" y2="1"><stop offset="0" stop-color="#0f5fb8"/><stop offset="1" stop-color="#203a6c"/></linearGradient></defs>
 <path d="M606.8 743V739.6Q606.8 738 608.4 738H616.8Q618.4 738 618.4 739.6V743" fill="none" stroke="#2cb8f6" stroke-width="1.6"/>
 <path d="M600.9 741.7Q600.9 740.9 601.7 740.9H623.3Q624.1 740.9 624.1 741.7V756.4Q624.1 760 620.5 760H604.5Q600.9 760 600.9 756.4Z" fill="url(#sg)"/>
 <rect x="607.8" y="746" width="4.3" height="4" fill="#f25022"/><rect x="612.9" y="746" width="4.3" height="4" fill="#7fba00"/>
 <rect x="607.8" y="750.9" width="4.3" height="4" fill="#00a4ef"/><rect x="612.9" y="750.9" width="4.3" height="4" fill="#ffb900"/>
</svg>
<!-- mail -->
<svg style="left:649.5px;top:736px" width="25" height="23" viewBox="0 0 25 23">
 <path d="M0.4 7.6L12.5 0.4L24.6 7.6V10H0.4Z" fill="#1258b0"/>
 <path d="M3.6 8.2H21.4V16H3.6Z" fill="#fff"/>
 <path d="M0.4 7.6L12.5 15.4L24.6 7.6V22.6H0.4Z" fill="#2cb6f2"/>
 <path d="M0.4 22.6L12.5 15.4L24.6 22.6Z" fill="#1a9fe6"/>
 <path d="M12.5 15.4L24.6 7.6V22.6Z" fill="#35c0f6"/>
</svg>
<!-- purple S app -->
<svg style="left:699px;top:736px" width="24" height="24" viewBox="0 0 24 24">
 <rect width="24" height="24" fill="#9a0089"/>
 <path d="M14.6 3.6L8.4 11.4L12 12.6L8.6 20.4L15.6 11.8L11.8 10.6Z" fill="#fff"/>
</svg>
<!-- E app -->
<svg style="left:750.5px;top:739px" width="19" height="18" viewBox="0 0 19 18"><rect width="18.6" height="17.8" rx="2" fill="#6f6f6f"/></svg>
<!-- word taskbar -->
<svg style="left:796.5px;top:736.5px" width="25" height="22" viewBox="0 0 25 22">
 <rect x="6.6" y="0.4" width="18" height="5.6" fill="#41a5ee"/><rect x="6.6" y="5.8" width="18" height="5.4" fill="#2b7cd3"/>
 <rect x="6.6" y="11" width="18" height="5.4" fill="#185abd"/><rect x="6.6" y="16.2" width="18" height="5.4" fill="#103f91"/>
 <rect x="7.4" y="6" width="7.4" height="12.6" fill="#0b2a63" opacity=".4"/>
 <rect x="0.4" y="5.3" width="12.9" height="12.3" rx="1" fill="#185abd"/>
 <text x="6.8" y="15" font-family="Liberation Sans, sans-serif" font-weight="bold" font-size="10.5" fill="#fff" text-anchor="middle">W</text>
</svg>
<!-- help -->
<svg style="left:984px;top:739px" width="21" height="21" viewBox="0 0 21 21"><circle cx="10.6" cy="10" r="9.8" fill="#fdfdfd"/><circle cx="10.6" cy="10" r="8.5" fill="#1090dc"/></svg>
<!-- weather -->
<svg style="left:1034px;top:737px" width="24" height="20" viewBox="0 0 24 20">
 <path d="M8.8 0.6C10.4 1.8 11.6 3.4 11.8 5.4L13.8 9.8L4 10.8C1.8 9.4 1.2 7.6 1.4 6C3.4 7.4 5.8 7 7.4 5.2C8.6 3.8 9 2.2 8.8 0.6Z" fill="#ffc20a"/>
 <path d="M6.4 18.8C3.8 18.8 2.6 17 2.8 15.2C3 13.6 4.4 12.4 6 12.4C6.6 9.6 8.8 7.6 11.8 7.6C14.6 7.6 16.6 9.2 17.6 11.4C20.4 11 22.8 12.8 22.8 15.2C22.8 17.2 21.4 18.8 19 18.8Z" fill="#cde6f7"/>
 <path d="M6.4 18.8C3.8 18.8 2.6 17 2.8 15.2C5 17 9 17.4 12.6 16.6C16.8 15.8 20.6 15.4 22.8 15.2C22.8 17.2 21.4 18.8 19 18.8Z" fill="#a9d3ee"/>
</svg>
<!-- tray -->
<svg style="left:1110px;top:740px" width="140" height="17" viewBox="0 0 140 17" fill="none" stroke="#111" stroke-width="1.2" stroke-linejoin="round">
 <path d="M1.4 10.6L7 5L12.6 10.6" stroke-width="1.4"/>
 <!-- meet now -->
 <rect x="26" y="4.4" width="7.6" height="8" rx="1.6"/><path d="M33.6 7.6L36.6 5.6V11.2L33.6 9.2"/>
 <path d="M27 2.4C28.6 0.6 32.2 0.6 33.8 2.4M27 14.6C28.6 16.4 32.2 16.4 33.8 14.6" stroke-width="1.1"/>
 <!-- onedrive cloud -->
 <path d="M50.6 13.2C48 13.2 46.8 11.6 47 10C47.2 8.6 48.4 7.6 49.8 7.6C50.4 4.8 52.4 3 55 3C57.4 3 59 4.4 59.8 6.4C62 6.2 63.4 7.8 63.4 9.8C63.4 11.8 62 13.2 60 13.2Z" fill="#bdbdbd"/>
 <path d="M47.6 11C52 12.2 58 9.4 62.6 7.6" stroke-width=".9"/>
 <!-- battery -->
 <rect x="76.6" y="5.2" width="9.8" height="6.8" fill="#111"/><path d="M86.6 7.4H87.8V9.8H86.6"/>
 <path d="M71.4 2.8V5M74.2 2.8V5M70.6 5H75V7.2Q75 8.8 73.4 8.8H72.2Q70.6 8.8 70.6 7.2ZM72.8 8.8V10.8Q72.8 11.8 74 11.8H76" stroke-width="1.1"/>
 <!-- wifi -->
 <circle cx="108.4" cy="13.4" r="1.3" fill="#111" stroke="none"/>
 <path d="M104.2 14.2C104.2 11.2 106 9.6 108.8 9.4M101 14.4C101 9.4 104 6.4 109 6.2M97.8 14.4C97.8 7.6 102 3.2 109.4 3" stroke-width="1.2" stroke-linecap="round"/>
 <!-- volume -->
 <path d="M119 6.6H121.4L125 3V14L121.4 10.6H119Z"/>
 <path d="M127.4 6.2C128.6 7.6 128.6 9.6 127.4 11M129.8 4.2C132 6.6 132 10.6 129.8 13M132.2 2.2C135.4 5.6 135.4 11.6 132.2 15" stroke-linecap="round" stroke-width="1.1"/>
</svg>
<!-- notification -->
<svg style="left:1323px;top:739.5px" width="26" height="25" viewBox="0 0 26 25">
 <path d="M1 0.8H18.8V13.4H6.6L3.4 16.6V13.4H1Z" fill="#111"/>
 <path d="M3.8 4.2H16M3.8 7H16M3.8 9.8H12" stroke="#d7d7d7" stroke-width="1.1"/>
 <circle cx="17" cy="15.6" r="7.8" fill="#d7d7d7" stroke="#111" stroke-width="1.1"/>
</svg>

<div class="a" style="left:0;top:0;width:1366px;height:768px;will-change:transform">
<span class="t" style="left:48.0px;top:16px;font-size:12px;line-height:16px;letter-spacing:-0.28px;">AutoSave</span>
<span class="t" style="left:127.7px;top:16px;font-size:12px;line-height:16px;letter-spacing:0.05px;color:#424242;">Off</span>
<span class="t" style="left:194.3px;top:16px;font-size:12px;line-height:16px;letter-spacing:-0.03px;">Document1</span>
<span class="t" style="left:262.8px;top:16px;font-size:12px;line-height:16px;">-</span>
<span class="t" style="left:273.0px;top:16px;font-size:12px;line-height:16px;letter-spacing:0.08px;">Word</span>
<span class="t" style="left:556.4px;top:16px;font-size:13px;line-height:17px;letter-spacing:-0.13px;color:#616161;">Search (Alt+Q)</span>
<span class="t" style="left:1055.1px;top:17px;font-size:12px;line-height:16px;letter-spacing:-0.37px;">Jenalle Sturgis</span>
<span class="t" style="left:1147.1px;top:17px;font-size:11px;line-height:14px;letter-spacing:-0.15px;color:#ffffff;transform:scaleX(0.78);transform-origin:0 50%;">JS</span>
<span class="t" style="left:22.3px;top:55px;font-size:13px;line-height:17px;letter-spacing:-0.3px;color:#333333;transform:scaleX(0.898);transform-origin:0 50%;">File</span>
<span class="t" style="left:68.0px;top:55px;font-size:13px;line-height:17px;letter-spacing:-0.03px;color:#333333;">Home</span>
<span class="t" style="left:124.4px;top:55px;font-size:13px;line-height:17px;letter-spacing:-0.24px;color:#333333;">Insert</span>
<span class="t" style="left:177.0px;top:55px;font-size:13px;line-height:17px;letter-spacing:-0.11px;color:#333333;">Draw</span>
<span class="t" style="left:227.0px;top:55px;font-size:13px;line-height:17px;letter-spacing:-0.17px;color:#333333;">Design</span>
<span class="t" style="left:288.4px;top:55px;font-size:13px;line-height:17px;letter-spacing:-0.29px;color:#333333;">Layout</span>
<span class="t" style="left:347.0px;top:55px;font-size:13px;line-height:17px;letter-spacing:-0.33px;color:#333333;">References</span>
<span class="t" style="left:431.4px;top:55px;font-size:13px;line-height:17px;letter-spacing:0.1px;color:#333333;">Mailings</span>
<span class="t" style="left:501.0px;top:55px;font-size:13px;line-height:17px;letter-spacing:-0.3px;color:#333333;transform:scaleX(0.973);transform-origin:0 50%;">Review</span>
<span class="t" style="left:561.0px;top:55px;font-size:13px;line-height:17px;letter-spacing:-0.32px;color:#333333;">View</span>
<span class="t" style="left:608.0px;top:55px;font-size:13px;line-height:17px;letter-spacing:-0.25px;color:#333333;">Help</span>
<span class="t" style="left:656.4px;top:55px;font-size:13px;line-height:17px;letter-spacing:-0.09px;color:#333333;">Grammarly</span>
<span class="t" style="left:741.0px;top:55px;font-size:13px;line-height:17px;letter-spacing:0.4px;color:#185abd;-webkit-text-stroke:0.35px #185abd;">Picture Format</span>
<span class="t" style="left:1202.3px;top:55px;font-size:13px;line-height:17px;letter-spacing:0.35px;">Comments</span>
<span class="t" style="left:1310.0px;top:55px;font-size:13px;line-height:17px;letter-spacing:-0.3px;color:#ffffff;transform:scaleX(0.982);transform-origin:0 50%;font-weight:bold;">Share</span>
<span class="t" style="left:33.2px;top:120px;font-size:12px;line-height:16px;letter-spacing:-0.34px;">Remove</span>
<span class="t" style="left:22.5px;top:136px;font-size:12px;line-height:16px;letter-spacing:-0.12px;">Background</span>
<span class="t" style="left:104.5px;top:120px;font-size:12px;line-height:16px;letter-spacing:-0.09px;">Corrections</span>
<span class="t" style="left:194.6px;top:87px;font-size:12px;line-height:16px;letter-spacing:-0.07px;">Color</span>
<span class="t" style="left:194.6px;top:113px;font-size:12px;line-height:16px;letter-spacing:-0.11px;">Artistic Effects</span>
<span class="t" style="left:194.6px;top:139px;font-size:12px;line-height:16px;letter-spacing:-0.43px;">Transparency</span>
<span class="t" style="left:158.9px;top:160px;font-size:12px;line-height:16px;letter-spacing:-0.11px;color:#424242;">Adjust</span>
<span class="t" style="left:517.4px;top:160px;font-size:12px;line-height:16px;letter-spacing:-0.3px;color:#424242;transform:scaleX(0.952);transform-origin:0 50%;">Picture Styles</span>
<span class="t" style="left:675.3px;top:87px;font-size:12px;line-height:16px;letter-spacing:-0.17px;">Picture Border</span>
<span class="t" style="left:675.3px;top:113px;font-size:12px;line-height:16px;letter-spacing:-0.2px;">Picture Effects</span>
<span class="t" style="left:675.3px;top:139px;font-size:12px;line-height:16px;letter-spacing:-0.1px;">Picture Layout</span>
<span class="t" style="left:805.0px;top:120px;font-size:12px;line-height:16px;letter-spacing:0.49px;">Alt</span>
<span class="t" style="left:802.5px;top:136px;font-size:12px;line-height:16px;letter-spacing:-0.3px;transform:scaleX(0.971);transform-origin:0 50%;">Text</span>
<span class="t" style="left:782.0px;top:160px;font-size:12px;line-height:16px;letter-spacing:-0.36px;color:#424242;">Accessibility</span>
<span class="t" style="left:879.4px;top:87px;font-size:12px;line-height:16px;letter-spacing:-0.11px;">Position</span>
<span class="t" style="left:879.4px;top:113px;font-size:12px;line-height:16px;letter-spacing:-0.31px;">Wrap Text</span>
<span class="t" style="left:879.4px;top:139px;font-size:12px;line-height:16px;letter-spacing:-0.2px;color:#b0b0b0;">Bring Forward</span>
<span class="t" style="left:1004.0px;top:87px;font-size:12px;line-height:16px;letter-spacing:-0.39px;color:#b0b0b0;">Send Backward</span>
<span class="t" style="left:1004.0px;top:113px;font-size:12px;line-height:16px;letter-spacing:-0.29px;">Selection Pane</span>
<span class="t" style="left:1004.0px;top:139px;font-size:12px;line-height:16px;letter-spacing:0.2px;">Align</span>
<span class="t" style="left:982.2px;top:160px;font-size:12px;line-height:16px;letter-spacing:-0.4px;color:#424242;">Arrange</span>
<span class="t" style="left:1175.3px;top:120px;font-size:12px;line-height:16px;letter-spacing:-0.27px;">Crop</span>
<span class="t" style="left:1236.0px;top:94px;font-size:12px;line-height:16px;letter-spacing:-0.3px;transform:scaleX(0.961);transform-origin:0 50%;">3.07&quot;</span>
<span class="t" style="left:1236.0px;top:126px;font-size:12px;line-height:16px;letter-spacing:-0.3px;transform:scaleX(0.947);transform-origin:0 50%;">6.5&quot;</span>
<span class="t" style="left:1217.4px;top:160px;font-size:12px;line-height:16px;letter-spacing:-0.3px;color:#424242;transform:scaleX(0.842);transform-origin:0 50%;">Size</span>
<span class="t" style="left:8.2px;top:710px;font-size:11.5px;line-height:15px;letter-spacing:-0.32px;color:#333333;">Page 1 of 1</span>
<span class="t" style="left:84.0px;top:710px;font-size:11.5px;line-height:15px;letter-spacing:0.04px;color:#333333;">0 words</span>
<span class="t" style="left:178.0px;top:710px;font-size:11.5px;line-height:15px;letter-spacing:-0.07px;color:#333333;">Text Predictions: On</span>
<span class="t" style="left:317.0px;top:710px;font-size:11.5px;line-height:15px;letter-spacing:0.02px;color:#333333;">Accessibility: Good to go</span>
<span class="t" style="left:1024.7px;top:711px;font-size:11.5px;line-height:15px;letter-spacing:-0.3px;color:#333333;transform:scaleX(0.959);transform-origin:0 50%;">Focus</span>
<span class="t" style="left:1331.7px;top:710px;font-size:11.5px;line-height:15px;letter-spacing:-0.3px;color:#333333;transform:scaleX(0.912);transform-origin:0 50%;">100%</span>
<span class="t" style="left:88.7px;top:739px;font-size:15px;line-height:20px;letter-spacing:-0.3px;color:#3a3a3a;">Type here to search</span>
<span class="t" style="left:1065.6px;top:740px;font-size:14px;line-height:18px;letter-spacing:-0.3px;color:#1a1a1a;transform:scaleX(0.95);transform-origin:0 50%;">43°F</span>
<span class="t" style="left:1260.0px;top:730px;font-size:12px;line-height:16px;letter-spacing:-0.45px;color:#1a1a1a;">6:56 PM</span>
<span class="t" style="left:1255.0px;top:748px;font-size:12px;line-height:16px;letter-spacing:-0.2px;color:#1a1a1a;">2/21/2022</span>
<span class="t" style="left:1337.2px;top:749px;font-size:10px;line-height:13px;color:#1a1a1a;">7</span>
<span class="t" style="left:756.5px;top:741px;font-size:10.5px;line-height:14px;color:#1f1f1f;">E</span>
<span class="t" style="left:989.4px;top:740px;font-size:17px;line-height:22px;color:#ffffff;font-weight:bold;">?</span>
<span class="t" style="left:371.8px;top:470px;font-size:12px;line-height:16px;letter-spacing:0.57px;color:#ffffff;">Alt Text: Text</span>
</div>
<span class="t" style="left:372.0px;top:197px;font-size:21px;line-height:27px;letter-spacing:0.41px;color:#3a3d42;font-family:'Liberation Serif', serif;transform:scaleX(1.08);transform-origin:0 50%;font-style:italic;-webkit-text-stroke:0.2px #3a3d42;">The</span>
<span class="t" style="left:412.8px;top:197px;font-size:21px;line-height:27px;letter-spacing:0.03px;color:#3a3d42;font-family:'Liberation Serif', serif;transform:scaleX(1.08);transform-origin:0 50%;font-style:italic;-webkit-text-stroke:0.2px #3a3d42;">answer</span>
<span class="t" style="left:485.5px;top:197px;font-size:21px;line-height:27px;letter-spacing:0.47px;color:#3a3d42;font-family:'Liberation Serif', serif;transform:scaleX(1.08);transform-origin:0 50%;font-style:italic;-webkit-text-stroke:0.2px #3a3d42;">for</span>
<span class="t" style="left:522.0px;top:197px;font-size:21px;line-height:27px;letter-spacing:0.57px;color:#3a3d42;font-family:'Liberation Serif', serif;transform:scaleX(1.08);transform-origin:0 50%;font-style:italic;-webkit-text-stroke:0.2px #3a3d42;">simplifying</span>
<span class="t" style="left:636.8px;top:197px;font-size:21px;line-height:27px;letter-spacing:-0.0px;color:#3a3d42;font-family:'Liberation Serif', serif;transform:scaleX(1.08);transform-origin:0 50%;font-style:italic;-webkit-text-stroke:0.2px #3a3d42;">the</span>
<span class="t" style="left:671.8px;top:197px;font-size:21px;line-height:27px;letter-spacing:0.06px;color:#3a3d42;font-family:'Liberation Serif', serif;transform:scaleX(1.08);transform-origin:0 50%;font-style:italic;-webkit-text-stroke:0.2px #3a3d42;">following</span>
<span class="t" style="left:764.3px;top:197px;font-size:21px;line-height:27px;letter-spacing:0.33px;color:#3a3d42;font-family:'Liberation Serif', serif;transform:scaleX(1.08);transform-origin:0 50%;font-style:italic;-webkit-text-stroke:0.2px #3a3d42;">expression</span>
<span class="t" style="left:868.7px;top:197px;font-size:21px;line-height:27px;letter-spacing:0.98px;color:#3a3d42;font-family:'Liberation Serif', serif;transform:scaleX(1.08);transform-origin:0 50%;font-style:italic;-webkit-text-stroke:0.2px #3a3d42;">is</span>
<span class="t" style="left:388.4px;top:248px;font-size:14px;line-height:18px;color:#3a3d42;font-family:'Liberation Serif', serif;-webkit-text-stroke:0.2px #3a3d42;">2</span>
<span class="t" style="left:388.4px;top:263px;font-size:14px;line-height:18px;color:#3a3d42;font-family:'Liberation Serif', serif;-webkit-text-stroke:0.2px #3a3d42;">9</span>
<span class="t" style="left:451.6px;top:248px;font-size:14px;line-height:18px;color:#3a3d42;font-family:'Liberation Serif', serif;-webkit-text-stroke:0.2px #3a3d42;">7</span>
<span class="t" style="left:449.3px;top:263px;font-size:14px;line-height:18px;letter-spacing:-0.3px;color:#3a3d42;font-family:'Liberation Serif', serif;transform:scaleX(0.964);transform-origin:0 50%;-webkit-text-stroke:0.2px #3a3d42;">12</span>
<span class="t" style="left:523.7px;top:248px;font-size:14px;line-height:18px;color:#3a3d42;font-family:'Liberation Serif', serif;-webkit-text-stroke:0.2px #3a3d42;">5</span>
<span class="t" style="left:520.5px;top:263px;font-size:14px;line-height:18px;letter-spacing:-0.3px;color:#3a3d42;font-family:'Liberation Serif', serif;transform:scaleX(0.985);transform-origin:0 50%;-webkit-text-stroke:0.2px #3a3d42;">12</span>
<span class="t" style="left:399.9px;top:303px;font-size:14px;line-height:18px;letter-spacing:-0.3px;color:#3a3d42;font-family:'Liberation Serif', serif;transform:scaleX(0.971);transform-origin:0 50%;-webkit-text-stroke:0.2px #3a3d42;">14</span>
<span class="t" style="left:399.9px;top:317px;font-size:14px;line-height:18px;letter-spacing:-0.3px;color:#3a3d42;font-family:'Liberation Serif', serif;transform:scaleX(0.971);transform-origin:0 50%;-webkit-text-stroke:0.2px #3a3d42;">12</span>
<span class="t" style="left:396.6px;top:354px;font-size:20px;line-height:26px;letter-spacing:-0.3px;color:#3a3d42;font-family:'Liberation Serif', serif;transform:scaleX(0.954);transform-origin:0 50%;-webkit-text-stroke:0.2px #3a3d42;">12</span>
<span class="t" style="left:424.9px;top:353px;font-size:14px;line-height:18px;color:#3a3d42;font-family:'Liberation Serif', serif;-webkit-text-stroke:0.2px #3a3d42;">2</span>
<span class="t" style="left:424.9px;top:368px;font-size:14px;line-height:18px;color:#3a3d42;font-family:'Liberation Serif', serif;-webkit-text-stroke:0.2px #3a3d42;">9</span>
<span class="t" style="left:398.9px;top:405px;font-size:14px;line-height:18px;letter-spacing:0.6px;color:#3a3d42;font-family:'Liberation Serif', serif;-webkit-text-stroke:0.2px #3a3d42;">20</span>
<span class="t" style="left:402.6px;top:419px;font-size:14px;line-height:18px;color:#3a3d42;font-family:'Liberation Serif', serif;-webkit-text-stroke:0.2px #3a3d42;">9</span>
<span class="t" style="left:399.9px;top:456px;font-size:14px;line-height:18px;letter-spacing:-0.3px;color:#2d2d2d;font-family:'Liberation Serif', serif;transform:scaleX(0.978);transform-origin:0 50%;">11</span>
</body>
</html>
